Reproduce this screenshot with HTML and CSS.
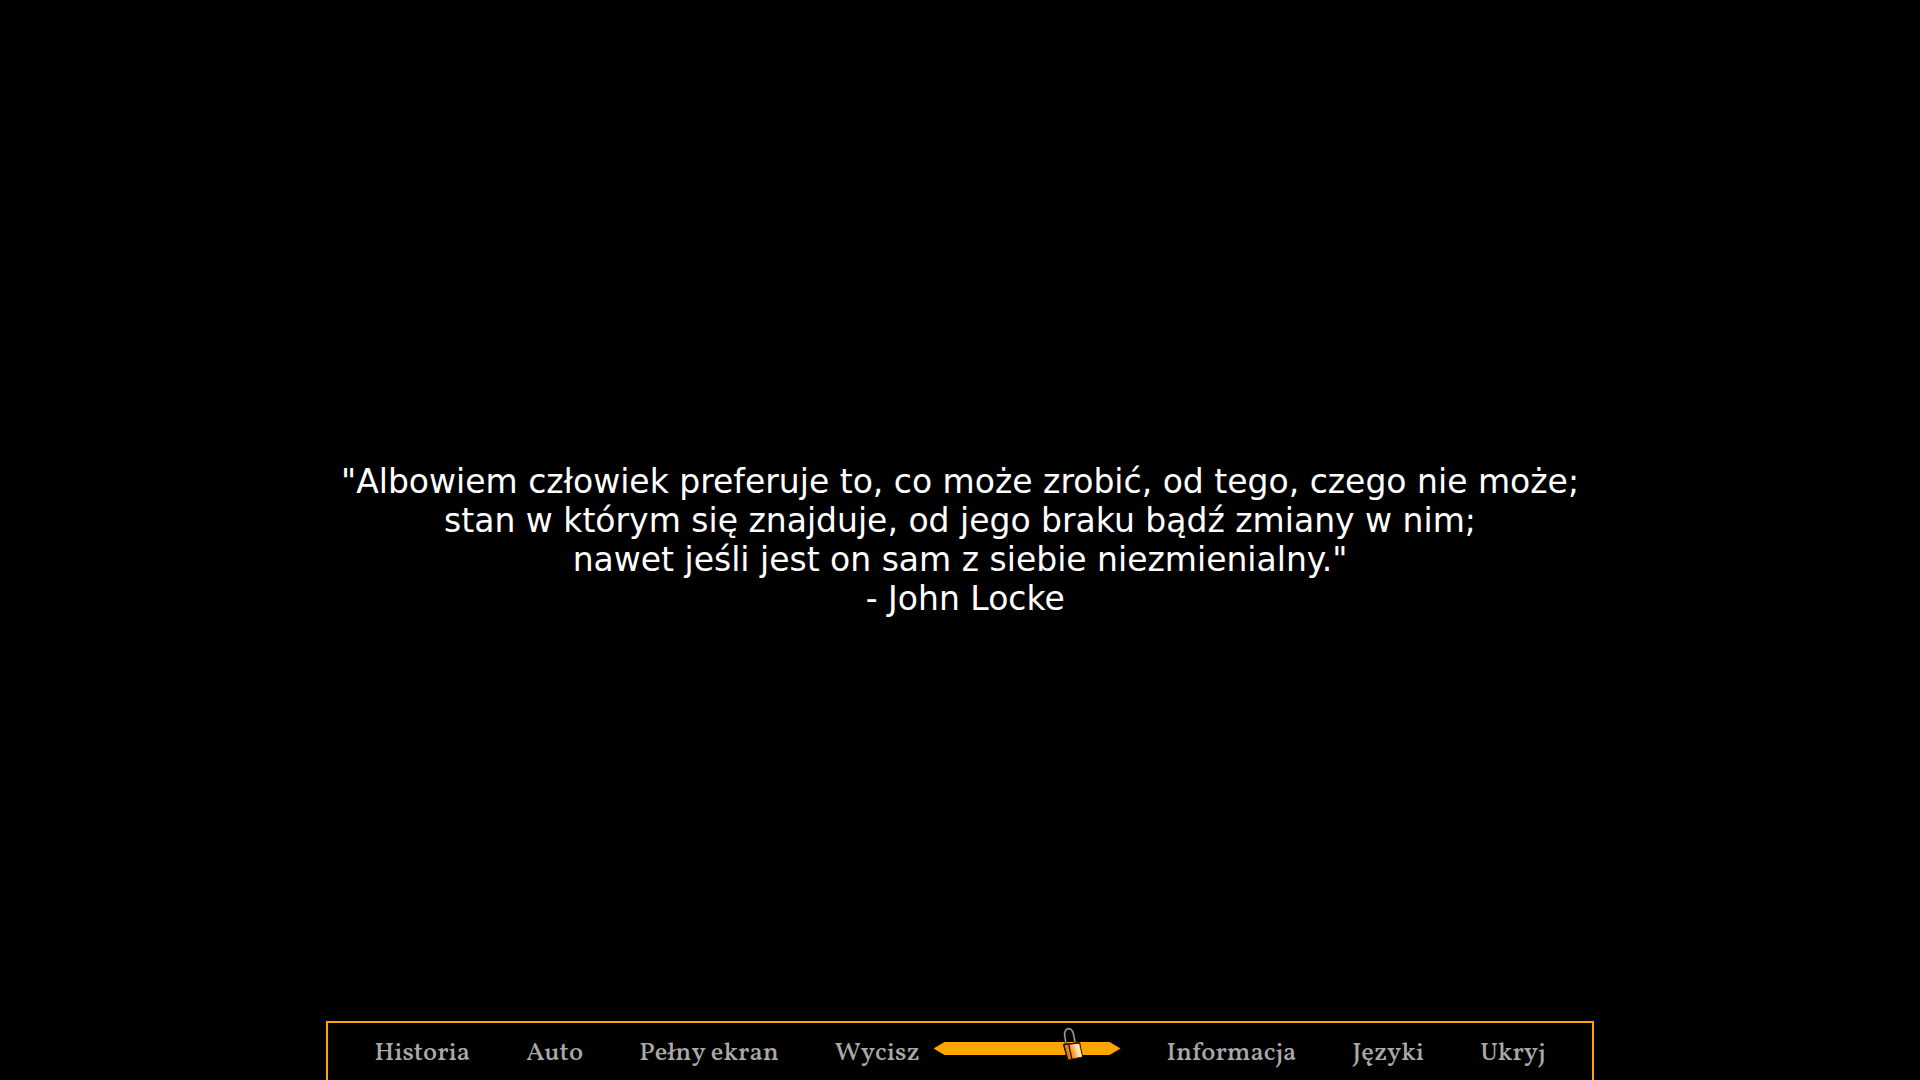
FILE: index.html
```html
<!DOCTYPE html>
<html lang="pl">
  <head>
    <meta charset="UTF-8">
    <title>John Locke</title>
    <link rel="stylesheet" href="styles.css">
  </head>
  <body>

    <main class="scene">
      <p class="quote">
        "Albowiem człowiek preferuje to, co może zrobić, od tego, czego nie może;<br>
        stan w którym się znajduje, od jego braku bądź zmiany w nim;<br>
        nawet jeśli jest on sam z siebie niezmienialny."<br>
        &nbsp;- John Locke
      </p>
    </main>

    <nav class="menu">
      <button type="button">Historia</button>
      <button type="button">Auto</button>
      <button type="button">Pełny ekran</button>
      <div class="sound">
        <button type="button">Wycisz</button>
        <div class="volume">
          <input type="range" class="track" min="0" max="100" value="75" aria-label="Wycisz">
          <svg class="lock" width="24" height="34" viewBox="0 0 24 34" aria-hidden="true">
            <defs>
              <linearGradient id="brass" x1="0" y1="0.3" x2="1" y2="0">
                <stop offset="0" stop-color="#d87800"/>
                <stop offset="0.3" stop-color="#f09010"/>
                <stop offset="0.6" stop-color="#ffd898"/>
                <stop offset="0.72" stop-color="#fff0d0"/>
                <stop offset="0.82" stop-color="#f0a840"/>
                <stop offset="1" stop-color="#c87000"/>
              </linearGradient>
            </defs>
            <path d="M5 17 L3.6 8 Q3.6 2 7.5 1.7 Q11 1.7 12.5 7 L14.2 16" fill="none" stroke="#222" stroke-width="2.6"/>
            <path d="M5 17 L3.6 8 Q3.6 2 7.5 1.7 Q11 1.7 12.5 7 L14.2 16" fill="none" stroke="#a4a4a4" stroke-width="1.3"/>
            <path d="M2.5 17.5 L18.8 15.8 L21.6 30 L6.7 33 Z" fill="url(#brass)" stroke="#2a1800" stroke-width="1"/>
            <path d="M2.5 17.5 L18.8 15.8 M2.8 18 L6.7 32 M7.6 17.2 L10.8 32" fill="none" stroke="#1c1000" stroke-width="1.2"/>
          </svg>
        </div>
      </div>
      <button type="button">Informacja</button>
      <button type="button">Języki</button>
      <button type="button">Ukryj</button>
    </nav>

  </body>
</html>
```
FILE: styles.css
```css
body {
  margin: 0;
  min-height: 100vh;
  display: grid;
  background: #000;
  color: #fff;
}

.scene, .menu {
  grid-area: 1 / 1;
}

.scene {
  display: flex;
  align-items: center;
  justify-content: center;
}

.quote {
  margin: 0;
  font-family: "DejaVu Sans", Verdana, sans-serif;
  font-size: 33px;
  line-height: 39px;
  text-align: center;
}

.menu {
  align-self: end;
  justify-self: center;
  box-sizing: border-box;
  width: 66%;
  padding: 15px 18px 11px;
  display: flex;
  align-items: center;
  justify-content: space-between;
  border: 2px solid orange;
  border-bottom: none;
}

button {
  padding: 0 28px;
  border: none;
  background: none;
  color: darkgray;
  font-family: Vollkorn, "Liberation Serif", serif;
  font-size: 26px;
  font-weight: 500;
  font-kerning: none;
  line-height: 31px;
  cursor: pointer;
}

button:hover {
  color: #fff;
}

.sound {
  display: flex;
  align-items: center;
}

.volume {
  position: relative;
  display: flex;
  margin: 0 18px 0 -14px;
  padding-bottom: 10px;
}

.track {
  -webkit-appearance: none;
  appearance: none;
  width: 187px;
  height: 13px;
  margin: 0;
  background: orange;
  clip-path: polygon(0 50%, 11px 0, calc(100% - 11px) 0, 100% 50%, calc(100% - 11px) 100%, 11px 100%);
}

.track::-webkit-slider-thumb {
  -webkit-appearance: none;
  width: 20px;
  height: 13px;
}

/* padlock hangs over the track, clicks go through to it */
.lock {
  position: absolute;
  left: 68%;
  top: -15px;
  pointer-events: none;
}
```
